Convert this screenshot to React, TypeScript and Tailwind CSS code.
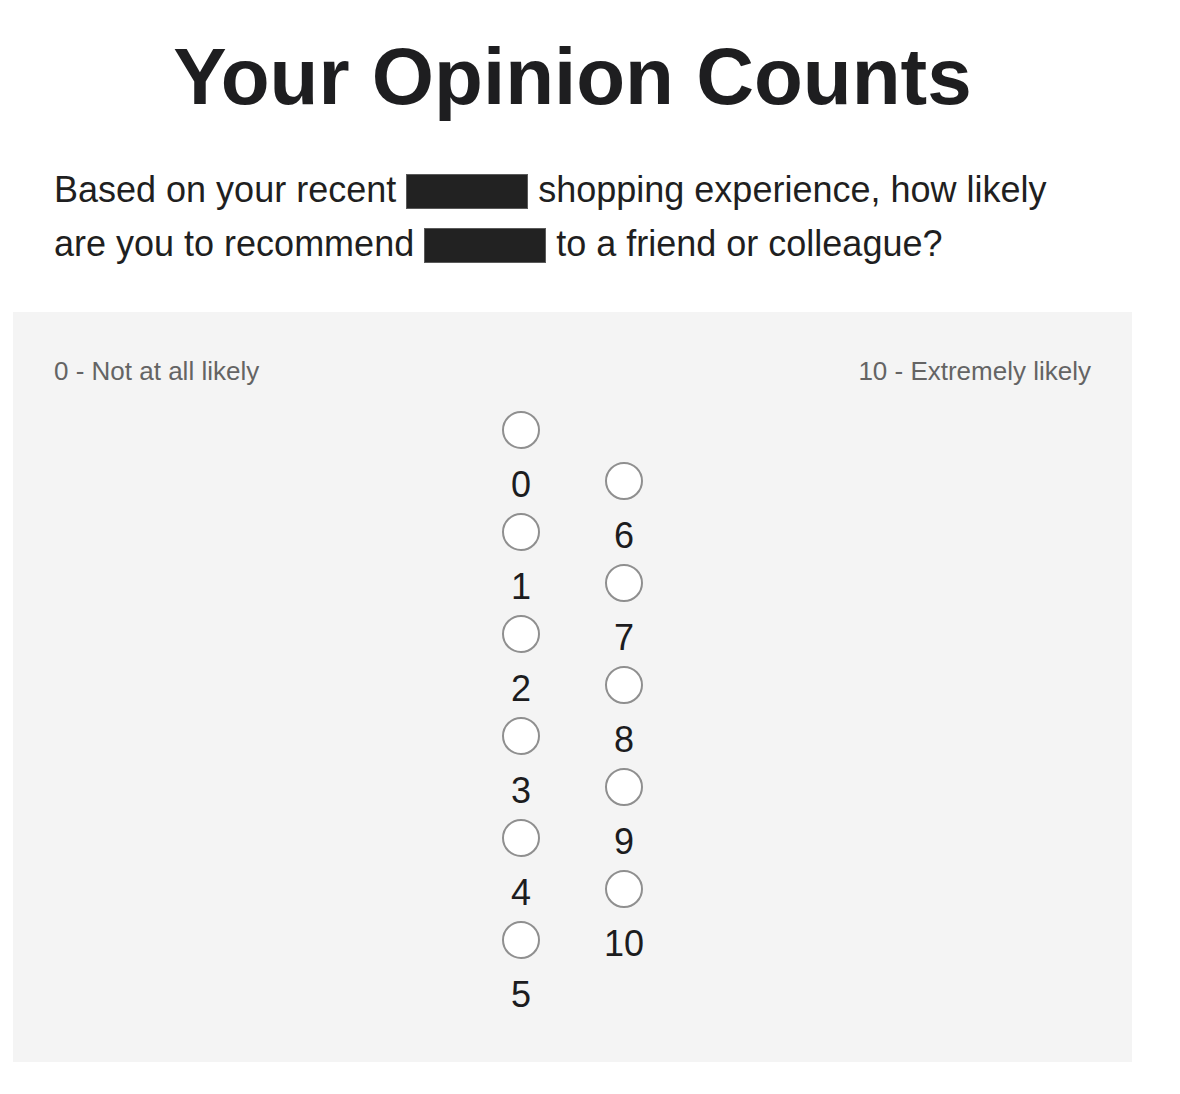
import React from "react";

const col1 = [0, 1, 2, 3, 4, 5];
const col2 = [6, 7, 8, 9, 10];

function Item({ n }: { n: number }) {
  return (
    <label className="flex flex-col items-center mb-[8px]">
      <span className="block w-[38px] h-[38px] rounded-full border-2 border-[#8f8f8f] bg-white" />
      <span className="block mt-[15px] text-[36px] leading-[41px] text-[#1c1c1e]">{n}</span>
    </label>
  );
}

function Redact() {
  return (
    <span className="inline-block w-[122px] h-[35px] align-[-7px] bg-[#222222] border border-[#5a5a5a]" />
  );
}

export default function App() {
  return (
    <div
      className="w-[1180px] h-[1094px] bg-white"
      style={{ fontFamily: '"Liberation Sans", Arial, Helvetica, sans-serif' }}
    >
      <div className="ml-[13px] w-[1119px]">
        <h1 className="pt-[37px] text-center text-[80px] leading-[80px] font-bold text-[#1e1e20]">
          Your Opinion Counts
        </h1>
        <p className="mt-[46px] px-[41px] text-[36px] leading-[54px] text-[#1f1f21]">
          Based on your recent <Redact /> shopping experience, how likely are you to recommend{" "}
          <Redact /> to a friend or colleague?
        </p>
        <div className="mt-[41px] h-[750px] bg-[#f4f4f4] px-[41px] pt-[44px]">
          <div className="flex justify-between text-[26px] leading-[30px] text-[#646464]">
            <span>0 - Not at all likely</span>
            <span>10 - Extremely likely</span>
          </div>
          <div className="mt-[25px] flex justify-center gap-[39px]">
            <div className="w-[64px] flex flex-col items-center">
              {col1.map((n) => (
                <Item key={n} n={n} />
              ))}
            </div>
            <div className="w-[64px] flex flex-col items-center pt-[51px]">
              {col2.map((n) => (
                <Item key={n} n={n} />
              ))}
            </div>
          </div>
        </div>
      </div>
    </div>
  );
}
